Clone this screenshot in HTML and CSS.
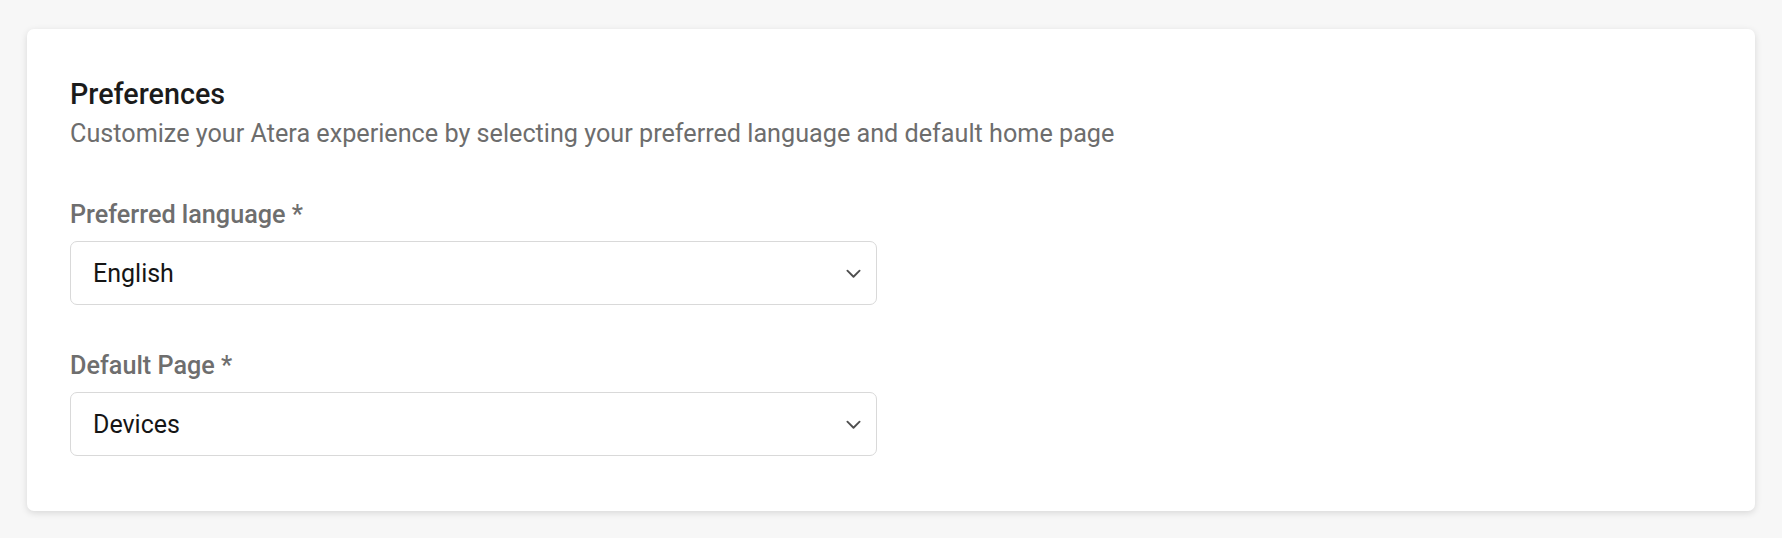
FILE: index.html
```html
<!DOCTYPE html>
<html lang="en">
<head>
<meta charset="utf-8">
<title>Preferences</title>
<link rel="stylesheet" href="styles.css">
</head>
<body>
<main class="page">
  <section class="card">
    <header class="card-head">
      <h1 class="title">Preferences</h1>
      <p class="subtitle">Customize your Atera experience by selecting your preferred language and default home page</p>
    </header>
    <div class="field">
      <label class="label">Preferred language *</label>
      <div class="select">
        <span class="value">English</span>
        <svg class="chevron" viewBox="0 0 16 16" width="16" height="16"><path d="M1.5 5l6.5 6.5L14.5 5" fill="none" stroke="#4f4f4f" stroke-width="2" stroke-linecap="round" stroke-linejoin="round"/></svg>
      </div>
    </div>
    <div class="field">
      <label class="label">Default Page *</label>
      <div class="select">
        <span class="value">Devices</span>
        <svg class="chevron" viewBox="0 0 16 16" width="16" height="16"><path d="M1.5 5l6.5 6.5L14.5 5" fill="none" stroke="#4f4f4f" stroke-width="2" stroke-linecap="round" stroke-linejoin="round"/></svg>
      </div>
    </div>
  </section>
</main>
</body>
</html>
```
FILE: styles.css
```css
html, body {
  margin: 0;
  padding: 0;
  background: #f7f7f7;
  font-family: Roboto, "Liberation Sans", Arial, sans-serif;
}
.page {
  padding: 29px 27px 27px;
}
.card {
  background: #fff;
  border-radius: 7px;
  box-shadow: 0 2px 7px rgba(0, 0, 0, 0.13);
  padding: 48px 43px 55px;
  display: flex;
  flex-direction: column;
}
.card-head {
  display: flex;
  flex-direction: column;
  gap: 8px;
  margin-bottom: 51px;
}
.title {
  margin: 0;
  font-size: 28.7px;
  line-height: 34px;
  font-weight: 500;
  color: #1b1b1b;
}
.subtitle {
  margin: 0;
  font-size: 25.2px;
  line-height: 30px;
  color: #6d6d6d;
}
.field {
  display: flex;
  flex-direction: column;
  gap: 11px;
  margin-bottom: 46px;
}
.field:last-child {
  margin-bottom: 0;
}
.label {
  font-size: 25.2px;
  line-height: 30px;
  font-weight: 500;
  color: #6e6e6e;
}
.select {
  box-sizing: border-box;
  width: 807px;
  height: 64px;
  border: 1px solid #d9d9d9;
  border-radius: 7px;
  display: flex;
  align-items: center;
  justify-content: space-between;
  padding: 0 15px 0 22px;
}
.value {
  font-size: 25px;
  color: #151515;
}
.chevron {
  width: 15px;
  height: 15px;
}
```
